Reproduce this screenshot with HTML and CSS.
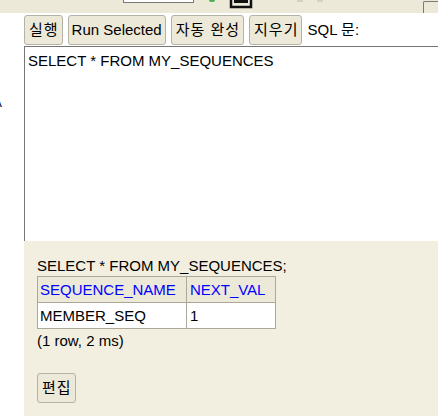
FILE: index.html
```html
<!DOCTYPE html>
<html lang="ko">
<head>
<meta charset="utf-8">
<title>H2 Console</title>
<link rel="stylesheet" href="styles.css">
</head>
<body>
<div class="topbar">
  <span class="tb-input"></span>
  <span class="tb-green"></span>
  <svg class="tb-icon" width="24" height="10" viewBox="0 0 24 10"><path d="M2 0V7H22V0" fill="none" stroke="#111" stroke-width="2.5"/><rect x="5" y="0" width="14" height="3" fill="#111"/></svg>
  <span class="tb-grey"></span>
  <span class="tb-grey tb-grey2"></span>
  <span class="tb-box"></span>
</div>
<div class="main">
  <div class="gutter"><span class="cut">A</span></div>
  <div class="content">
    <div class="toolbar">
      <button class="btn ko">실행</button>
      <button class="btn">Run Selected</button>
      <button class="btn ko">자동 완성</button>
      <button class="btn ko">지우기</button>
      <span class="label">SQL 문:</span>
    </div>
    <textarea class="sql" readonly>SELECT * FROM MY_SEQUENCES</textarea>
    <div class="result">
      <div class="query">SELECT * FROM MY_SEQUENCES;</div>
      <table class="rs">
        <tr><th>SEQUENCE_NAME</th><th>NEXT_VAL</th></tr>
        <tr><td>MEMBER_SEQ</td><td>1</td></tr>
      </table>
      <div class="stats">(1 row, 2 ms)</div>
      <button class="btn ko edit">편집</button>
    </div>
  </div>
</div>
</body>
</html>
```
FILE: styles.css
```css
html, body {
  margin: 0;
  padding: 0;
  height: 416px;
  overflow: hidden;
  background: #fff;
  font-family: "Liberation Sans", "Noto Sans CJK KR", sans-serif;
  font-size: 15px;
  color: #000;
}
.topbar {
  height: 13px;
  background: #ece9d8;
  display: flex;
  align-items: flex-start;
  overflow: hidden;
}
.tb-input {
  display: block;
  width: 69px;
  height: 20px;
  margin-top: -19px;
  margin-left: 123px;
  border: 1px solid #7a7a7a;
  background: #fff;
}
.tb-green {
  display: block;
  width: 6px;
  height: 2px;
  margin-left: 15px;
  background: #4caf50;
  border-radius: 0 0 3px 3px;
}
.tb-icon {
  display: block;
  margin-left: 14px;
}
.tb-grey {
  display: block;
  width: 6px;
  height: 2px;
  margin-left: 44px;
  background: #d4d0c4;
}
.tb-grey2 { margin-left: 14px; }
.tb-box {
  display: block;
  flex: 1;
  height: 20px;
  margin-left: 100px;
  margin-top: 1px;
  border-top: 1px solid #7a7a7a;
  border-left: 1px solid #7a7a7a;
  border-radius: 2px 0 0 0;
}
.main {
  display: flex;
  height: 403px;
}
.gutter {
  width: 24px;
  flex: none;
  overflow: hidden;
  padding-top: 80px;
  font-size: 15px;
}
.cut {
  margin-left: -8px;
  color: #1a2a6c;
}
.content {
  flex: 1;
  display: flex;
  flex-direction: column;
  min-width: 0;
}
.toolbar {
  display: flex;
  align-items: center;
  gap: 5px;
  padding-top: 2px;
  height: 30px;
}
.btn {
  font-family: "Liberation Sans", "Noto Sans CJK KR", sans-serif;
  font-size: 15px;
  height: 30px;
  padding: 0 3px;
  line-height: 28px;
  background: #ece9d8;
  border: 1px solid #b5b2a6;
  border-radius: 3px;
  color: #000;
}
.ko {
  letter-spacing: 1px;
  padding: 0 3px 0 4px;
}
.label {
  line-height: 28px;
}
.sql {
  display: block;
  margin: 1px 0 0 0;
  height: 195px;
  width: calc(100% + 20px);
  box-sizing: border-box;
  border: 1px solid #767676;
  border-right: none;
  border-bottom: none;
  padding: 5px 3px;
  resize: none;
  font-family: "Liberation Sans", "Noto Sans CJK KR", sans-serif;
  font-size: 15px;
  line-height: 17px;
  color: #000;
  background: #fff;
  outline: none;
}
.result {
  flex: 1;
  background: #f3efe0;
  padding: 16px 13px 0;
}
.query {
  line-height: 17px;
  height: 17px;
}
.rs {
  border-collapse: collapse;
  margin-top: 2px;
}
.rs th, .rs td {
  border: 1px solid #aca899;
  padding: 4px 10px 4px 2px;
  text-align: left;
  font-weight: normal;
  line-height: 17px;
}
.rs th + th, .rs td + td {
  padding-left: 3px;
}
.rs th {
  background: #ece9d8;
  color: #0000ff;
}
.rs td {
  background: #fff;
}
.stats {
  margin-top: 3px;
  line-height: 17px;
}
.edit {
  margin-top: 24px;
}
```
